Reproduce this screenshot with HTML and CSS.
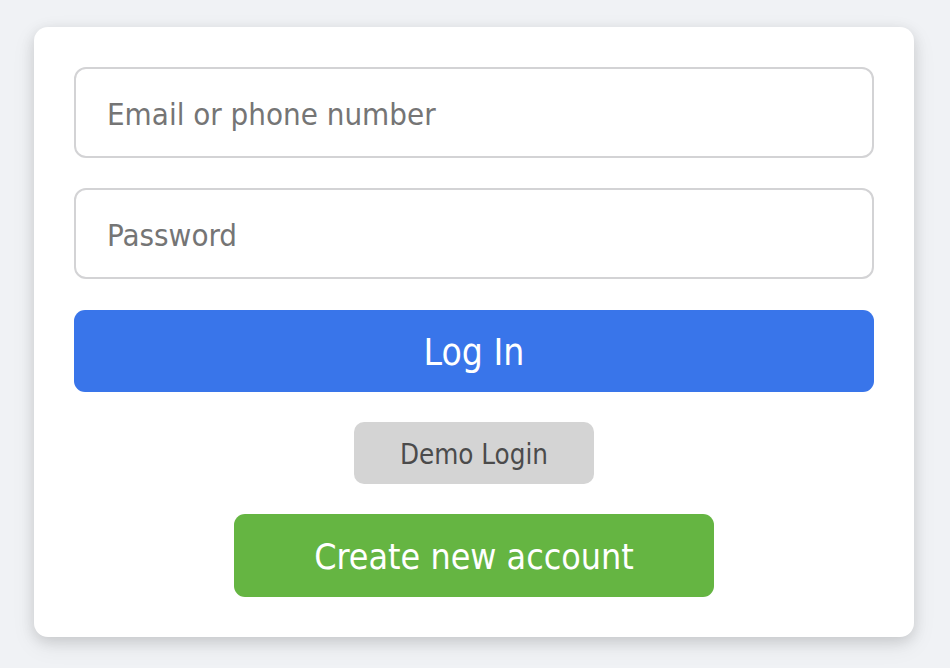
FILE: index.html
```html
<!DOCTYPE html>
<html>
<head>
<meta charset="utf-8">
<link rel="stylesheet" href="styles.css">
</head>
<body>
<div class="page">
  <form class="card">
    <input class="field" type="text" placeholder="Email or phone number">
    <input class="field" type="password" placeholder="Password">
    <button type="button" class="btn-login">Log In</button>
    <button type="button" class="btn-demo">Demo Login</button>
    <button type="button" class="btn-create">Create new account</button>
  </form>
</div>
</body>
</html>
```
FILE: styles.css
```css
html, body {
  margin: 0;
  padding: 0;
  background: #f0f2f5;
}
.page {
  box-sizing: border-box;
  min-height: 100vh;
  padding: 27px 0 31px 34px;
  font-family: Tahoma, "DejaVu Sans Condensed", "DejaVu Sans", sans-serif;
}
.card {
  box-sizing: border-box;
  width: 880px;
  height: 610px;
  background: #fff;
  border-radius: 14px;
  box-shadow: 0 4px 14px rgba(0, 0, 0, 0.12), 0 8px 24px rgba(0, 0, 0, 0.08);
  padding: 40px;
  display: flex;
  flex-direction: column;
  align-items: center;
}
.field {
  box-sizing: border-box;
  width: 800px;
  height: 91px;
  border: 2px solid #d3d3d5;
  border-radius: 12px;
  padding: 4px 31px 0;
  font-family: inherit;
  font-size: 31px;
  color: #1c1e21;
  outline: none;
  margin-bottom: 30px;
}
.field::placeholder {
  color: #757575;
}
.btn-login, .btn-demo, .btn-create {
  box-sizing: border-box;
  border: none;
  font-family: inherit;
  cursor: pointer;
}
.btn-login {
  width: 800px;
  height: 83px;
  padding-top: 4px;
  background: #3975ea;
  color: #fff;
  font-size: 37px;
  border-radius: 11px;
  margin-top: 1px;
}
.btn-demo {
  width: 240px;
  height: 62px;
  padding-top: 2px;
  margin-top: 30px;
  background: #d4d4d4;
  color: #4b4b4b;
  font-size: 27.5px;
  border-radius: 10px;
}
.btn-create {
  width: 480px;
  height: 83px;
  padding-top: 3px;
  margin-top: 30px;
  background: #65b542;
  color: #fff;
  font-size: 35.5px;
  border-radius: 11px;
}
```
